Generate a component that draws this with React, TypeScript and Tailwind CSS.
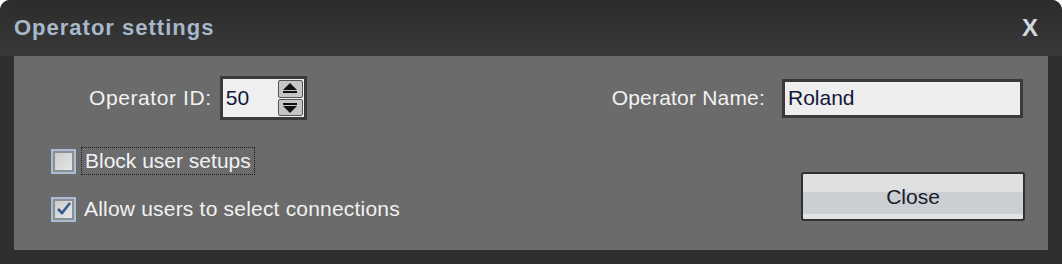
import { useState } from "react";

const font = { fontFamily: '"Liberation Sans", Arial, sans-serif' };

// spinner arrow drawn as triangle + bar
const SpinArrow = ({ up }: { up: boolean }) => (
  <svg width="14" height="11" viewBox="0 0 14 11">
    {up ? (
      <>
        <polygon points="7,0 14,7 0,7" fill="#111" />
        <rect x="0" y="8" width="14" height="2" fill="#111" />
      </>
    ) : (
      <>
        <rect x="0" y="1" width="14" height="2" fill="#111" />
        <polygon points="0,4 14,4 7,11" fill="#111" />
      </>
    )}
  </svg>
);

const CheckBox = ({ checked }: { checked: boolean }) => (
  <div className="w-[25px] h-[25px] border-2 border-[#a9bcd6] bg-[#8d8f93] p-[2px] shrink-0">
    <div className="w-full h-full bg-gradient-to-br from-[#c9cbce] to-[#e6e7e8] flex items-center justify-center">
      {checked && (
        <svg width="16" height="16" viewBox="0 0 16 16">
          <path d="M2 8 L6 12 L14 2" stroke="#3b5a87" strokeWidth="2.6" fill="none" />
        </svg>
      )}
    </div>
  </div>
);

export default function App() {
  const [block, setBlock] = useState(false);
  const [allow, setAllow] = useState(true);

  return (
    <div
      style={font}
      className="w-[1062px] h-[264px] bg-[#2f2f2f] flex flex-col rounded-tl-[10px] rounded-tr-[10px] overflow-hidden"
    >
      {/* title bar */}
      <div className="h-[56px] shrink-0 px-[14px] flex items-center justify-between bg-gradient-to-b from-[#2c2c2c] to-[#393939]">
        <span className="text-[22px] font-bold tracking-[1px] text-[#a7b8cb] leading-none">
          Operator settings
        </span>
        <span className="text-[24px] font-bold text-[#cfd8e3] leading-none mr-[10px]">
          X
        </span>
      </div>

      {/* content */}
      <div className="mx-[14px] h-[194px] bg-[#6b6b6b] pt-[20px] text-[21px] text-[#f2f2f2]">
        <div className="flex items-center h-[44px]">
          <div className="flex items-center ml-[75px] gap-[8px]">
            <span className="tracking-[0.6px]">Operator ID:</span>
            <div className="w-[87px] h-[44px] border-[3px] border-[#3a3a3a] bg-[#efefef] flex">
              <div className="flex-1 flex items-center pl-[3px] text-[#101838]">50</div>
              <div className="w-[26px] flex flex-col gap-[1px] py-[1px] pr-[1px]">
                <div className="flex-1 bg-[#c5c5c5] border border-[#555] rounded-[2px] flex items-center justify-center">
                  <SpinArrow up />
                </div>
                <div className="flex-1 bg-[#c5c5c5] border border-[#555] rounded-[2px] flex items-center justify-center">
                  <SpinArrow up={false} />
                </div>
              </div>
            </div>
          </div>
          <div className="flex items-center ml-auto mr-[25px] gap-[17px]">
            <span className="tracking-[0.2px]">Operator Name:</span>
            <div className="w-[241px] h-[39px] border-[3px] border-[#3a3a3a] bg-[#eeeeee] flex items-center pl-[3px] text-[#101838]">
              Roland
            </div>
          </div>
        </div>

        <div className="flex mt-[27px]">
          <div className="flex flex-col gap-[20px] pl-[37px]">
            <div className="flex items-center gap-[5px] cursor-default" onClick={() => setBlock(!block)}>
              <CheckBox checked={block} />
              <span className="border border-dotted border-[#1a1a1a] px-[3px] h-[28px] flex items-center">
                Block user setups
              </span>
            </div>
            <div className="flex items-center gap-[8px] cursor-default" onClick={() => setAllow(!allow)}>
              <CheckBox checked={allow} />
              <span className="h-[28px] flex items-center tracking-[0.2px]">Allow users to select connections</span>
            </div>
          </div>
          <div className="ml-auto mr-[23px] pt-[25px]">
            <button className="w-[224px] h-[49px] border-2 border-[#303030] rounded-[3px] bg-[linear-gradient(#dfe0e2_0%,#dfe0e2_40%,#cbced3_40%,#cbced3_88%,#e2e3e5_88%)] text-[#1c1c28] text-[21px]">
              Close
            </button>
          </div>
        </div>
      </div>
    </div>
  );
}
